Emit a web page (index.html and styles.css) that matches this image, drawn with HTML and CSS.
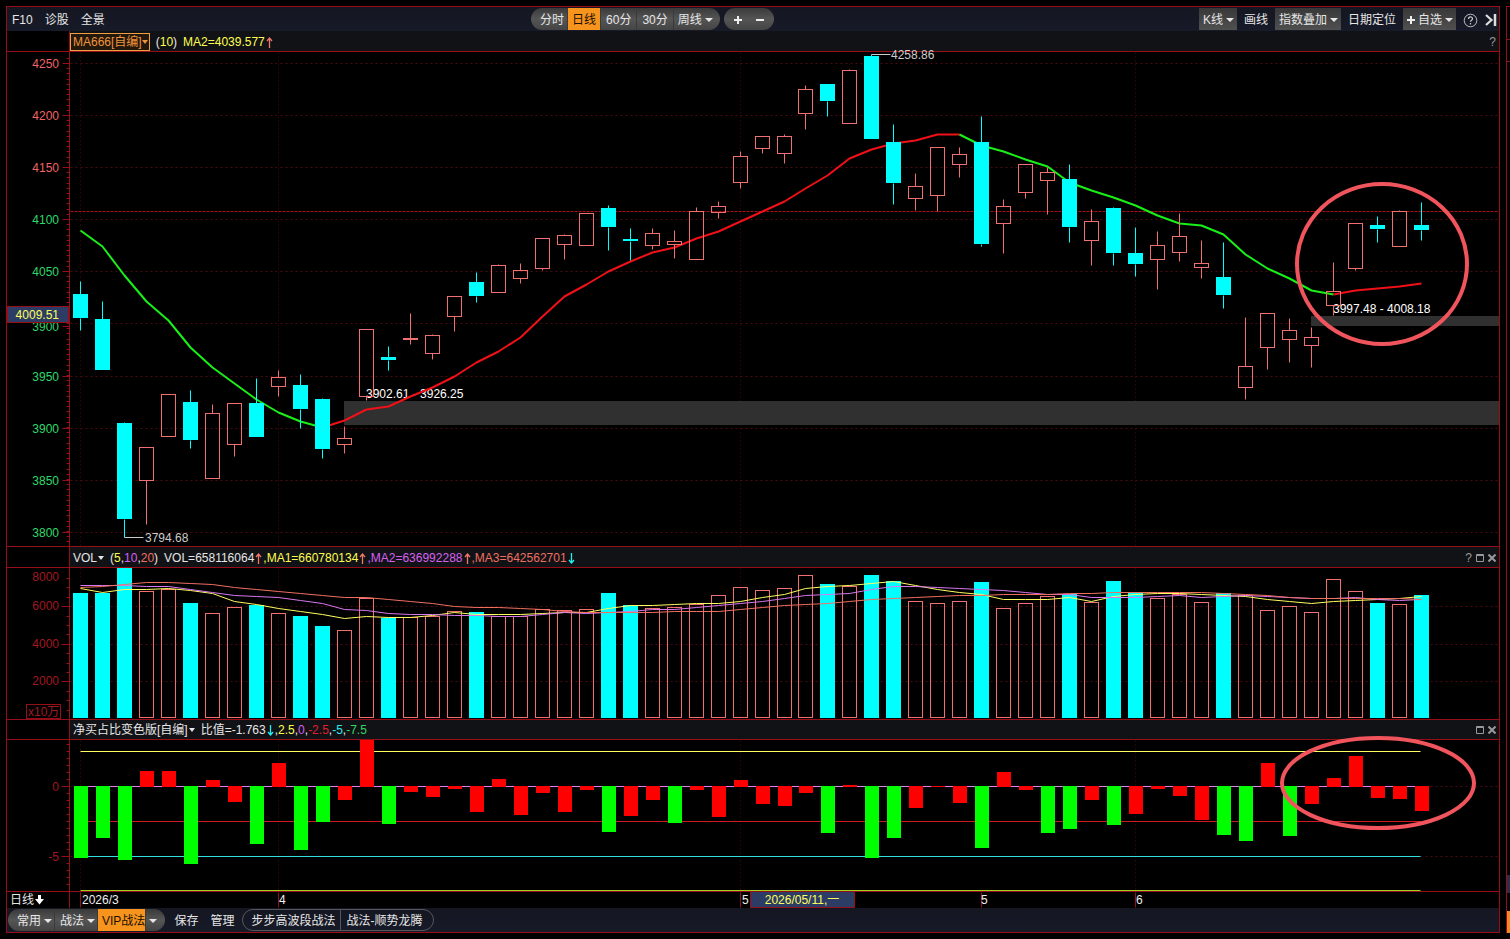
FILE: index.html
```html
<!DOCTYPE html>
<html lang="zh-CN">
<head>
<meta charset="utf-8">
<title>日线</title>
<link rel="stylesheet" href="styles.css">
</head>
<body>
<main class="frame">
  <header class="bar top-bar">
    <nav class="links">
      <button class="plain">F10</button>
      <button class="plain">诊股</button>
      <button class="plain">全景</button>
    </nav>
    <div class="periods">
      <div class="pill">
        <button class="seg seg-first">分时</button>
        <button class="seg seg-on">日线</button>
        <button class="seg">60分</button>
        <button class="seg">30分</button>
        <button class="seg seg-last">周线<i class="caret"></i></button>
      </div>
      <div class="pill zoom">
        <button class="seg" aria-label="放大"><svg width="10" height="10"><path d="M5 1v8M1 5h8" stroke="#eee" stroke-width="2"/></svg></button>
        <button class="seg" aria-label="缩小"><svg width="10" height="10"><path d="M1 5h8" stroke="#eee" stroke-width="2"/></svg></button>
      </div>
    </div>
    <div class="tools">
      <button class="tool tool-box">K线<i class="caret"></i></button>
      <button class="tool">画线</button>
      <button class="tool tool-box">指数叠加<i class="caret"></i></button>
      <button class="tool">日期定位</button>
      <button class="tool tool-box"><svg width="8" height="8"><path d="M4 0v8M0 4h8" stroke="#eee" stroke-width="2"/></svg>自选<i class="caret"></i></button>
      <button class="tool icon" aria-label="帮助"><svg width="15" height="15"><circle cx="7.500" cy="7.500" r="6.300" fill="none" stroke="#bbb" stroke-width="1"/><path d="M5.500 6c0-2.800 4-2.600 4-.3 0 1.500-2 1.500-2 3M7.500 10v1.500" fill="none" stroke="#ccc" stroke-width="1.200"/></svg></button>
      <button class="tool icon" aria-label="收起"><svg width="12" height="12"><path d="M1 1l5.500 5L1 11" fill="none" stroke="#ddd" stroke-width="2.200"/><path d="M10 0v12" stroke="#ddd" stroke-width="2.500"/></svg></button>
    </div>
  </header>

  <section class="stage">
    <div class="corner"></div>
    <div class="head">
      <button class="formula">MA666[自编]<i class="caret"></i></button>
      <span class="params">(<b class="yellow">10</b>)</span>
      <span class="yellow">MA2=4039.577<svg class="arrow up" viewBox="0 0 7 11"><path d="M3.500 11V1M1 4l2.500-3L6 4"/></svg></span>
      <span class="win"><button aria-label="说明">?</button></span>
    </div>
    <div class="axis"><svg id="price-axis"></svg></div>
    <div class="plot"><svg id="price"></svg></div>

    <div class="corner"></div>
    <div class="head">
      <button class="title">VOL<i class="caret"></i></button>
      <span class="params">(<b class="yellow">5</b>,<b class="purple">10</b>,<b class="salmon">20</b>)</span>
      <span>VOL=658116064<svg class="arrow up" viewBox="0 0 7 11"><path d="M3.500 11V1M1 4l2.500-3L6 4"/></svg><b class="yellow">,MA1=660780134</b><svg class="arrow up" viewBox="0 0 7 11"><path d="M3.500 11V1M1 4l2.500-3L6 4"/></svg><b class="purple">,MA2=636992288</b><svg class="arrow up" viewBox="0 0 7 11"><path d="M3.500 11V1M1 4l2.500-3L6 4"/></svg><b class="salmon">,MA3=642562701</b><svg class="arrow down" viewBox="0 0 7 11"><path d="M3.500 0v10M1 7l2.500 3L6 7"/></svg></span>
      <span class="win">
        <button aria-label="说明">?</button>
        <button aria-label="最大化"><svg width="8" height="8"><path d="M.5 .5h7v7h-7zM0 1.500h8" fill="none" stroke="#999"/></svg></button>
        <button aria-label="关闭"><svg width="8" height="8"><path d="M.5 .5l7 7M7.500 .5l-7 7" stroke="#999" stroke-width="2"/></svg></button>
      </span>
    </div>
    <div class="axis"><svg id="volume-axis"></svg></div>
    <div class="plot"><svg id="volume"></svg></div>

    <div class="corner"></div>
    <div class="head">
      <button class="title">净买占比变色版[自编]<i class="caret"></i></button>
      <span>比值=-1.763<svg class="arrow down" viewBox="0 0 7 11"><path d="M3.500 0v10M1 7l2.500 3L6 7"/></svg>,<b class="yellow">2.5</b>,<b class="purple">0</b>,<b class="crimson">-2.5</b>,<b class="cyan">-5</b>,<b class="green">-7.5</b></span>
      <span class="win">
        <button aria-label="最大化"><svg width="8" height="8"><path d="M.5 .5h7v7h-7zM0 1.500h8" fill="none" stroke="#999"/></svg></button>
        <button aria-label="关闭"><svg width="8" height="8"><path d="M.5 .5l7 7M7.500 .5l-7 7" stroke="#999" stroke-width="2"/></svg></button>
      </span>
    </div>
    <div class="axis"><svg id="ratio-axis"></svg></div>
    <div class="plot"><svg id="ratio"></svg></div>

    <div class="unit">日线<svg width="9" height="10"><path d="M3 0h3v4h3L4.500 9.500 0 4h3z" fill="#fff"/></svg></div>
    <div class="dates"><svg id="dates"></svg></div>
  </section>

  <footer class="bar bottom-bar">
    <div class="pill">
      <button class="seg seg-first">常用<i class="caret"></i></button>
      <button class="seg">战法<i class="caret"></i></button>
      <button class="seg seg-on">VIP战法</button>
      <button class="seg seg-arrow" aria-label="更多"><i class="caret"></i></button>
    </div>
    <button class="plain">保存</button>
    <button class="plain">管理</button>
    <div class="outline">
      <button>步步高波段战法</button>
      <button>战法-顺势龙腾</button>
    </div>
  </footer>
</main>
<aside class="side"><div class="side-line"></div><div class="side-line side-line-b"></div><div class="side-fill"></div><div class="side-blue"></div><div class="side-gap"></div><div class="side-orange"></div></aside>
<script src="chart.js"></script>
</body>
</html>
```
FILE: styles.css
```css
* { box-sizing: border-box; }
body {
  margin: 0;
  height: 100vh;
  padding: 6px 0 6px 6px;
  display: flex;
  gap: 6px;
  background: #000;
  color: #e6e6e6;
  font: 12px/16px "Liberation Sans", "Noto Sans CJK SC", sans-serif;
  overflow: hidden;
}
button {
  margin: 0;
  padding: 0;
  border: 0;
  background: none;
  color: inherit;
  font: inherit;
  white-space: nowrap;
}
b { font-weight: normal; }
svg { display: block; }
.frame {
  flex: 1;
  min-width: 0;
  display: flex;
  flex-direction: column;
  border: 1px solid #960f18;
}
.bar {
  flex: none;
  height: 24px;
  display: flex;
  align-items: center;
  background: linear-gradient(#141621, #171a28);
}
.top-bar { display: grid; grid-template-columns: 524px auto 1fr; }
.links { display: flex; gap: 12px; padding-left: 5px; }
.periods { display: flex; gap: 4px; }
.pill {
  display: flex;
  height: 22px;
  border-radius: 11px;
  overflow: hidden;
  background: linear-gradient(#3a3a3a, #555 50%, #444);
}
.seg {
  display: flex;
  align-items: center;
  gap: 3px;
  padding: 0 5px;
  border-right: 1px solid #3a3a3a;
}
.seg:last-child { border-right: 0; }
.seg-first { padding-left: 9px; padding-right: 3px; }
.seg-last { padding: 0 7px 0 4px; }
.seg-on { background: #f7941d; color: #201000; padding: 0 4px; }
.zoom .seg { padding: 0 6px; border: 0; }
.zoom .seg:first-child { padding-left: 9px; }
.zoom .seg:last-child { padding-right: 9px; }
.caret {
  width: 6px;
  border: 3px solid transparent;
  border-top: 4px solid currentColor;
  border-bottom: 0;
  flex: none;
}
.bar .caret { border-left-width: 4px; border-right-width: 4px; width: 8px; }
.tools { display: flex; justify-content: flex-end; align-items: center; gap: 7px; padding-right: 2px; }
.tool { display: flex; align-items: center; height: 22px; gap: 3px; }
.tool-box { padding: 0 3px 0 4px; background: linear-gradient(#383838, #505050); }
.stage {
  flex: 1;
  min-height: 0;
  display: grid;
  grid-template-columns: 62px minmax(0, 1fr);
  grid-template-rows: 21px minmax(0, 495fr) 21px minmax(0, 152fr) 20px minmax(0, 152fr) 16px;
}
.corner, .head, .axis, .plot { border-bottom: 1px solid #960f18; min-height: 0; }
.head, .plot, .dates { border-left: 1px solid #960f18; }
.head {
  display: flex;
  align-items: center;
  gap: 6px;
  padding: 1px 0 0 3px;
  background: #111216;
  white-space: nowrap;
}
.head .formula {
  display: flex;
  align-items: center;
  height: 18px;
  padding: 1px 1px 0 2px;
  margin-left: -3px;
  border: 1px solid #f0a040;
  background: #22180c;
  color: #f0953c;
}
.title { display: flex; align-items: center; gap: 1px; }
.arrow {
  display: inline-block;
  width: 7px;
  height: 11px;
  margin: 0 1px;
  vertical-align: -2px;
  fill: none;
  stroke-width: 1.300;
}
.up { stroke: #f07868; }
.down { stroke: #20f0f0; }
.win { margin-left: auto; display: flex; align-items: center; gap: 4px; padding-right: 3px; color: #999; }
.win button { display: flex; }
.yellow { color: #ffff50; }
.purple { color: #d860f0; }
.salmon { color: #f07060; }
.crimson { color: #e02030; }
.cyan { color: #30e8e8; }
.green { color: #30d860; }
.axis svg, .plot svg, .dates svg { width: 100%; height: 100%; overflow: visible; }
.plot svg { position: relative; }
.unit { display: flex; align-items: center; gap: 1px; padding-left: 3px; }
.bottom-bar { padding-left: 1px; }
.bottom-bar .plain { margin-left: 9px; }
.bottom-bar .plain + .plain { margin-left: 12px; }
.bottom-bar .seg { padding: 0 2px 0 5px; }
.bottom-bar .seg-first { padding-left: 9px; }
.bottom-bar .seg-on { padding: 0 0 0 4px; }
.bottom-bar .seg-arrow { padding: 0 8px 0 3px; }
.outline {
  display: flex;
  height: 22px;
  margin-left: 8px;
  border: 1px solid #55565e;
  border-radius: 11px;
}
.outline button { padding: 0 5px 0 8px; }
.outline button + button { padding: 0 11px 0 5px; border-left: 1px solid #55565e; }
.bar .seg, .bar .tool, .bar .plain, .bar .outline button { padding-top: 2px; }
.side {
  flex: 0 0 4px;
  display: flex;
  flex-direction: column;
  border-left: 1px solid #960f18;
  border-top: 1px solid #960f18;
}
.side-line { height: 33px; border-bottom: 1px solid #960f18; }
.side-line-b { height: 22px; }
.side-fill { flex: 1; }
.side-blue { height: 18px; background: #2c2f4c; }
.side-gap { height: 18px; }
.side-orange { height: 22px; background: #f08c20; }
text { font: 12px "Liberation Sans", "Noto Sans CJK SC", sans-serif; }
```
FILE: chart.js
```js
// Candles: [kind, high, bodyTop, bodyBottom, low]; d = falling, u = rising.
const candles = [
['d',281,294,318,330],['d',301,319,370,370],['d',422,423,519,537],['u',447,447,480,524],['u',394,394,436,436],
['d',390,402,440,448],['u',404,413,478,478],['u',403,403,444,456],['d',378,403,437,437],['u',370,377,386,396],
['d',374,385,409,428],['d',398,399,449,458],['u',426,438,444,453],['u',329,329,396,400],['d',346,357,360,370],
['u',313,338,339,344],['u',334,335,353,359],['u',296,296,316,331],['d',272,282,296,302],['u',264,265,292,292],
['u',263,270,278,283],['u',238,238,268,270],['u',234,235,244,259],['u',213,213,245,245],['d',205,208,227,250],
['d',228,239,241,260],['u',228,233,245,249],['u',230,241,244,258],['u',207,211,259,259],['u',201,206,212,218],
['u',151,156,182,188],['u',136,136,148,153],['u',134,136,153,163],['u',85,89,113,129],['d',84,84,101,116],
['u',69,70,123,123],['d',54,56,139,139],['d',124,142,183,204],['u',173,186,198,210],['u',147,147,195,211],
['u',147,154,164,177],['d',116,142,244,246],['u',199,206,223,253],['u',164,164,192,198],['u',167,172,180,214],
['d',164,179,227,242],['u',209,221,240,265],['d',207,208,253,265],['d',227,253,264,276],['u',231,245,259,289],
['u',213,236,252,261],['u',240,263,267,278],['d',242,277,295,308],['u',317,366,387,399],['u',313,313,347,369],
['u',318,330,339,362],['u',327,337,345,367],['u',262,291,305,315],['u',223,223,268,270],['d',216,225,229,242],
['u',210,211,246,246],['d',202,225,230,240]];
const average = [230,246,275,301,320,347,367,383,399,412,421,427,420,409,406,396,387,376,362,351,337,316,296,284,271,261,252,247,238,231,221,211,201,188,175,158,149,143,140,134,134,145,151,159,166,182,190,197,205,215,223,225,234,254,268,278,290,294,290,288,286,283];
const volumes = [593,593,568,591,589,603,613,607,605,613,616,626,630,598,618,617,616,611,612,616,616,609,610,609,593,605,608,607,604,595,587,590,588,575,584,586,575,581,601,603,601,582,608,603,596,594,602,581,592,598,594,602,593,595,610,606,612,579,591,603,604,595];
const vol5 = [588,592,589,589,588,590,593,601,604,608,611,614,618,616,617,617,615,612,614,614,614,613,612,612,608,605,605,604,603,603,601,597,594,588,586,585,583,581,585,589,592,594,599,599,599,597,601,596,594,593,593,594,595,596,599,601,603,601,600,599,598,596];
const vol10 = [585,585,585,586,586,589,592,595,596,597,600,603,609,610,613,614,614,615,615,616,616,614,612,613,612,611,609,609,607,605,603,601,598,595,594,593,589,586,586,587,588,589,590,592,594,594,597,597,597,596,595,597,596,595,596,597,598,598,597,599,600,599];
const vol20 = [587,586,584,582,582,583,584,587,589,591,593,595,597,597,599,601,603,606,607,607,608,609,611,612,612,612,612,611,611,611,609,607,605,604,603,601,599,598,597,596,595,595,594,594,594,593,593,592,592,592,592,592,593,594,595,597,598,598,598,598,598,599];
const ratios = [858,838,860,771,771,864,780,802,844,763,850,822,800,740,824,792,797,789,812,779,815,793,812,790,832,816,800,823,790,817,780,804,806,793,833,785,858,838,808,787,803,848,772,790,833,829,800,825,814,789,796,820,835,841,763,836,804,778,756,798,799,811];

const SALMON = '#f07070', CYAN = '#00ffff', LINE = '#960f18', GRID = '#4a0a10';
const months = [80, 278, 740, 1135];
const slot = i => Math.floor(80.98 + 21.97 * i);

// Each surface maps a design extent (x0, y0, w, h) to the element's real size.
function surface(id, x0, y0, w, h) {
  const svg = document.getElementById(id);
  svg.innerHTML = '';
  const sx = svg.clientWidth / w, sy = svg.clientHeight / h;
  const X = v => Math.round((v - x0) * sx);
  const Y = v => Math.round((v - y0) * sy);
  const add = (tag, attrs, text) => {
    const el = document.createElementNS('http://www.w3.org/2000/svg', tag);
    for (const k in attrs) el.setAttribute(k, attrs[k]);
    if (text) el.textContent = text;
    svg.appendChild(el);
  };
  return {
    line(x1, y1, x2, y2, stroke, dash) {
      const a = { d: `M${X(x1) + .5} ${Y(y1) + .5}L${X(x2) + .5} ${Y(y2) + .5}`, stroke };
      if (dash) a['stroke-dasharray'] = dash;
      add('path', a);
    },
    poly(ys, from, to, stroke, width) {
      let d = '';
      for (let i = from; i <= to; i++) d += `${i === from ? 'M' : 'L'}${X(slot(i)) + .5} ${Y(ys[i]) + .5}`;
      add('path', { d, stroke, fill: 'none', 'stroke-width': width, 'stroke-linejoin': 'round' });
    },
    fill(l, t, r, b, color) {
      add('rect', { x: X(l), y: Y(t), width: X(r) - X(l), height: Math.max(1, Y(b) - Y(t)), fill: color });
    },
    box(l, t, r, b, color) {
      add('rect', { x: X(l) + .5, y: Y(t) + .5, width: X(r) - X(l), height: Y(b) - Y(t), fill: 'none', stroke: color });
    },
    text(x, y, s, color, anchor) {
      add('text', { x: X(x), y: Y(y), fill: color, 'text-anchor': anchor || 'start' }, s);
    },
    ring(cx, cy, rx, ry) {
      add('ellipse', { cx: X(cx), cy: Y(cy), rx: rx * sx, ry: ry * sy, fill: 'none', stroke: '#f0545c', 'stroke-width': 4 });
    }
  };
}

function ruler(s, top, bottom, start, step) {
  for (let y = start; y < bottom; y += step) if (y > top) s.line(66, y, 69, y, LINE);
}

function draw() {
  let s = surface('price', 70, 52, 1429, 494);
  [63,115,167,219,271,323,376,428,480,532].forEach(y => s.line(70, y, 1498, y, GRID, '2 3'));
  months.forEach(x => s.line(x, 52, x, 545, GRID, '1 3'));
  s.line(70, 211, 1498, 211, '#a81018', '3 1');
  s.fill(344, 401, 1499, 425, '#303030');
  s.fill(1311, 316, 1499, 326, '#303030');
  s.text(366, 398, '3902.61 - 3926.25', '#fff');
  s.text(1333, 313, '3997.48 - 4008.18', '#fff');
  s.poly(average, 0, 11, '#18f018', 2);
  s.poly(average, 11, 40, '#f01018', 2);
  s.poly(average, 40, 57, '#18f018', 2);
  s.poly(average, 57, 61, '#f01018', 2);
  candles.forEach(([k, hi, t, b, lo], i) => {
    const x = slot(i), c = k === 'd' ? CYAN : SALMON;
    if (hi < t) s.line(x, hi, x, t, c);
    if (lo > b) s.line(x, b, x, lo, c);
    if (k === 'd') s.fill(x - 7, t, x + 8, b, c); else s.box(x - 7, t, x + 7, b, c);
  });
  s.line(871, 54, 890, 54, '#ccc');
  s.text(891, 59, '4258.86', '#ccc');
  s.line(124, 537, 143, 537, '#ccc');
  s.text(145, 542, '3794.68', '#ccc');
  s.ring(1382, 264, 85, 80);

  s = surface('price-axis', 7, 52, 62, 494);
  ruler(s, 52, 546, 57.8, 5.2);
  [[63,4250],[115,4200],[167,4150],[219,4100],[271,4050],[326,3900],[376,3950],[428,3900],[480,3850],[532,3800]].forEach(([y, v], i) => {
    s.line(62, y, 69, y, LINE);
    s.text(59, y + 5, String(v), i < 3 ? '#f06464' : '#2fd86a', 'end');
  });
  s.fill(7, 306, 69, 323, '#2c3c64');
  s.box(7, 306, 68, 322, LINE);
  s.text(59, 319, '4009.51', '#ffff60', 'end');

  s = surface('volume', 70, 568, 1429, 151);
  [606,644,681].forEach(y => s.line(70, y, 1498, y, GRID, '2 3'));
  months.forEach(x => s.line(x, 568, x, 718, GRID, '1 3'));
  volumes.forEach((t, i) => {
    const x = slot(i);
    if (candles[i][0] === 'd') s.fill(x - 7, t, x + 8, 718, CYAN); else s.box(x - 7, t, x + 7, 717, SALMON);
  });
  s.poly(vol5, 0, 61, '#ffff60', 1);
  s.poly(vol10, 0, 61, '#d878f0', 1);
  s.poly(vol20, 0, 61, '#f07060', 1);

  s = surface('volume-axis', 7, 568, 62, 151);
  ruler(s, 568, 718, 578, 9.4);
  [[577,8000],[606,6000],[644,4000],[681,2000]].forEach(([y, v], i) => {
    if (i) s.line(61, y, 69, y, LINE);
    s.text(59, y + 4, String(v), '#a01820', 'end');
  });
  s.box(26, 704, 60, 718, LINE);
  s.text(28, 716, 'x10万', '#a01820');

  s = surface('ratio', 70, 740, 1429, 151);
  [786,856].forEach(y => s.line(70, y, 1498, y, GRID, '2 3'));
  months.forEach(x => s.line(x, 740, x, 890, GRID, '1 3'));
  [[751,'#ffff60'],[786,'#e080f0'],[821,'#d01820'],[856,'#30e0e0'],[890,'#a0d020']].forEach(([y, c]) => s.line(80, y, 1420, y, c));
  ratios.forEach((v, i) => {
    const x = slot(i);
    s.fill(x - 6, Math.min(v, 786), x + 8, Math.max(v, 787), v > 821 ? '#00ff00' : '#ff0000');
  });
  s.ring(1378, 783, 96, 45);

  s = surface('ratio-axis', 7, 740, 62, 151);
  ruler(s, 740, 890, 744, 7);
  [[786,'0'],[856,'-5']].forEach(([y, v]) => {
    s.line(61, y, 69, y, LINE);
    s.text(59, y + 5, v, '#a01820', 'end');
  });

  s = surface('dates', 70, 892, 1429, 16);
  [80, 278, 740, 981, 1135].forEach(x => s.line(x, 892, x, 907, LINE));
  [[82,'2026/3'],[279,'4'],[742,'5'],[981,'5'],[1136,'6']].forEach(([x, v]) => s.text(x, 904, v, '#eee'));
  s.fill(750, 892, 855, 908, '#2c3c64');
  s.box(750, 891, 854, 907, LINE);
  s.text(802, 904, '2026/05/11,一', '#ffff60', 'middle');
}
draw();
window.addEventListener('resize', draw);
```
